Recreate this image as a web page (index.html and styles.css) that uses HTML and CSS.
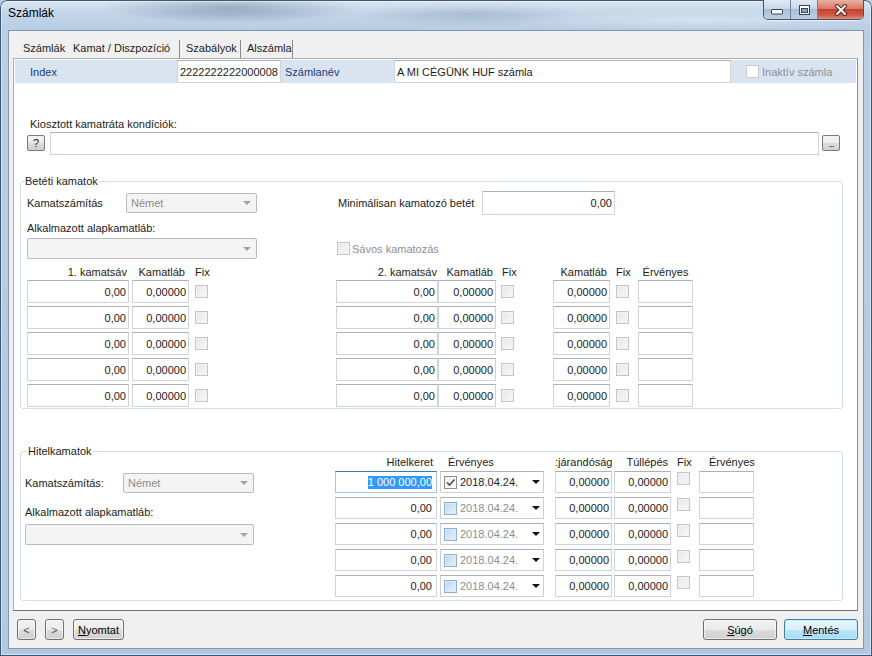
FILE: index.html
```html
<!DOCTYPE html>
<html lang="hu">
<head>
<meta charset="utf-8">
<title>Számlák</title>
<link rel="stylesheet" href="styles.css">
</head>
<body>
<div class="window">
  <div class="titlebar">
    <span class="title">Számlák</span>
    <div class="caption">
      <span class="cbtn min"><svg width="12" height="6" viewBox="0 0 12 6"><rect x="0.5" y="0.5" width="11" height="4.5" rx="0.5" fill="#fff" stroke="#34465c"/></svg></span>
      <span class="cbtn max"><svg width="11" height="10" viewBox="0 0 11 10"><rect x="0.5" y="0.5" width="10" height="9" fill="#fff" stroke="#34465c"/><rect x="2.5" y="3.5" width="6" height="4" fill="#8fa3ba" stroke="#34465c"/></svg></span>
      <span class="cbtn close"><svg width="14" height="12" viewBox="0 0 14 12"><path d="M3 2 L11 10 M11 2 L3 10" stroke="#5a2620" stroke-width="4" stroke-linecap="round"/><path d="M3 2 L11 10 M11 2 L3 10" stroke="#fff" stroke-width="2" stroke-linecap="round"/></svg></span>
    </div>
  </div>

  <div class="client">
    <div class="tabs">
      <span class="tab t1">Számlák</span>
      <span class="tab t2 active">Kamat / Diszpozíció</span>
      <span class="tab t3">Szabályok</span>
      <span class="tab t4">Alszámla</span>
    </div>

    <div class="page">
      <div class="hdr">
        <span class="hlabel w147">Index</span>
        <span class="tb hin w104">2222222222000008</span>
        <span class="hlabel ml4 w109">Számlanév</span>
        <span class="tb hin w337">A MI CÉGÜNK HUF számla</span>
        <span class="chk white ml15"></span>
        <span class="distext ml3">Inaktív számla</span>
      </div>

      <div class="klabel">Kiosztott kamatráta kondíciók:</div>
      <div class="krow">
        <span class="sbtn">?</span>
        <span class="tb klong ml5"></span>
        <span class="sbtn dots ml3">...</span>
      </div>

      <fieldset class="grp beteti">
        <legend class="lg1">Betéti kamatok</legend>
        <div class="gbody">
          <div class="brow ra">
            <div class="tl">
              <span class="lbl w99">Kamatszámítás</span>
              <span class="sel w131">Német<i class="arr"></i></span>
            </div>
            <div class="tr">
              <span class="lbl ml2 w144">Minimálisan kamatozó betét</span>
              <span class="tb num tall w133">0,00</span>
            </div>
          </div>
          <div class="brow rb">
            <div class="tl"><span class="lbl">Alkalmazott alapkamatláb:</span></div>
          </div>
          <div class="brow rc">
            <div class="tl"><span class="sel w230 h21"><i class="arr"></i></span></div>
            <div class="tr"><span class="chk ml1"></span><span class="distext ml2">Sávos kamatozás</span></div>
          </div>
          <div class="brow thr">
            <div class="tl">
              <span class="th w102 r pr2">1. kamatsáv</span>
              <span class="th w57 ml3 r pr4">Kamatláb</span>
              <span class="th ml6">Fix</span>
            </div>
            <div class="tr">
              <span class="th w102 r pr1">2. kamatsáv</span>
              <span class="th w58 r pr3">Kamatláb</span>
              <span class="th w13 ml5 pl1">Fix</span>
              <span class="th w57 ml39 r pr3">Kamatláb</span>
              <span class="th w13 ml6">Fix</span>
              <span class="th w55 ml9 c">Érvényes</span>
            </div>
          </div>

          <div class="trow first">
            <div class="tl"><span class="tb num w102">0,00</span><span class="tb num w57 ml3">0,00000</span><span class="chk ml6"></span></div>
            <div class="tr"><span class="tb num w102">0,00</span><span class="tb num w58">0,00000</span><span class="chk ml5"></span><span class="tb num w57 ml39">0,00000</span><span class="chk ml6"></span><span class="tb w55 ml9"></span></div>
          </div>
          <div class="trow">
            <div class="tl"><span class="tb num w102">0,00</span><span class="tb num w57 ml3">0,00000</span><span class="chk ml6"></span></div>
            <div class="tr"><span class="tb num w102">0,00</span><span class="tb num w58">0,00000</span><span class="chk ml5"></span><span class="tb num w57 ml39">0,00000</span><span class="chk ml6"></span><span class="tb w55 ml9"></span></div>
          </div>
          <div class="trow">
            <div class="tl"><span class="tb num w102">0,00</span><span class="tb num w57 ml3">0,00000</span><span class="chk ml6"></span></div>
            <div class="tr"><span class="tb num w102">0,00</span><span class="tb num w58">0,00000</span><span class="chk ml5"></span><span class="tb num w57 ml39">0,00000</span><span class="chk ml6"></span><span class="tb w55 ml9"></span></div>
          </div>
          <div class="trow">
            <div class="tl"><span class="tb num w102">0,00</span><span class="tb num w57 ml3">0,00000</span><span class="chk ml6"></span></div>
            <div class="tr"><span class="tb num w102">0,00</span><span class="tb num w58">0,00000</span><span class="chk ml5"></span><span class="tb num w57 ml39">0,00000</span><span class="chk ml6"></span><span class="tb w55 ml9"></span></div>
          </div>
          <div class="trow">
            <div class="tl"><span class="tb num w102">0,00</span><span class="tb num w57 ml3">0,00000</span><span class="chk ml6"></span></div>
            <div class="tr"><span class="tb num w102">0,00</span><span class="tb num w58">0,00000</span><span class="chk ml5"></span><span class="tb num w57 ml39">0,00000</span><span class="chk ml6"></span><span class="tb w55 ml9"></span></div>
          </div>
        </div>
      </fieldset>

      <fieldset class="grp hitel">
        <legend class="lg2">Hitelkamatok</legend>
        <div class="gbody hbody">
          <div class="hleft">
            <div class="hl1">
              <span class="lbl w98">Kamatszámítás:</span>
              <span class="sel w131">Német<i class="arr"></i></span>
            </div>
            <div class="hl2 lbl">Alkalmazott alapkamatláb:</div>
            <span class="sel w229 h21 hl3"><i class="arr"></i></span>
          </div>
          <div class="hright">
            <div class="hth">
              <span class="th w102 r pr4">Hitelkeret</span>
              <span class="th w104 ml3 pl8">Érvényes</span>
              <span class="th w57 ml11 clip">:járandóság</span>
              <span class="th w57 ml2 r pr3">Túllépés</span>
              <span class="th w13 ml6">Fix</span>
              <span class="th w55 ml9 pl10">Érvényes</span>
            </div>
            <div class="hrow first">
              <span class="tb num focus w102 pr4"><span class="selt">1 000 000,00</span></span>
              <span class="dp ml3"><span class="chk checked"><svg width="11" height="11" viewBox="0 0 11 11"><path d="M2 5.5 L4.5 8 L9.5 2.5" fill="none" stroke="#4a4a4a" stroke-width="1.6"/></svg></span><span class="dtxt">2018.04.24.</span><span class="dd"></span></span>
              <span class="tb num w57 ml11">0,00000</span>
              <span class="tb num w57 ml2">0,00000</span>
              <span class="chk top ml6"></span>
              <span class="tb w55 ml9"></span>
            </div>
            <div class="hrow">
              <span class="tb num w102 pr4">0,00</span>
              <span class="dp ml3"><span class="chk blue"></span><span class="dtxt grey">2018.04.24.</span><span class="dd"></span></span>
              <span class="tb num w57 ml11">0,00000</span>
              <span class="tb num w57 ml2">0,00000</span>
              <span class="chk top ml6"></span>
              <span class="tb w55 ml9"></span>
            </div>
            <div class="hrow">
              <span class="tb num w102 pr4">0,00</span>
              <span class="dp ml3"><span class="chk blue"></span><span class="dtxt grey">2018.04.24.</span><span class="dd"></span></span>
              <span class="tb num w57 ml11">0,00000</span>
              <span class="tb num w57 ml2">0,00000</span>
              <span class="chk top ml6"></span>
              <span class="tb w55 ml9"></span>
            </div>
            <div class="hrow">
              <span class="tb num w102 pr4">0,00</span>
              <span class="dp ml3"><span class="chk blue"></span><span class="dtxt grey">2018.04.24.</span><span class="dd"></span></span>
              <span class="tb num w57 ml11">0,00000</span>
              <span class="tb num w57 ml2">0,00000</span>
              <span class="chk top ml6"></span>
              <span class="tb w55 ml9"></span>
            </div>
            <div class="hrow">
              <span class="tb num w102 pr4">0,00</span>
              <span class="dp ml3"><span class="chk blue"></span><span class="dtxt grey">2018.04.24.</span><span class="dd"></span></span>
              <span class="tb num w57 ml11">0,00000</span>
              <span class="tb num w57 ml2">0,00000</span>
              <span class="chk top ml6"></span>
              <span class="tb w55 ml9"></span>
            </div>
          </div>
        </div>
      </fieldset>
    </div>

    <div class="footer">
      <span class="btn small">&lt;</span>
      <span class="btn small ml9">&gt;</span>
      <span class="btn ml9 w51"><u>N</u>yomtat</span>
      <span class="btn w74 push"><u>S</u>úgó</span>
      <span class="btn w74 ml7 default"><u>M</u>entés</span>
    </div>
  </div>
</div>
</body>
</html>
```

FILE: styles.css
```css
* { box-sizing: border-box; }
html, body { margin: 0; padding: 0; }
body {
  width: 872px;
  height: 656px;
  overflow: hidden;
  font-family: "Liberation Sans", Arial, sans-serif;
  font-size: 11px;
  color: #1c1c1c;
  background: #b9cee5;
}

/* window frame */
.window {
  width: 872px;
  height: 656px;
  display: flex;
  flex-direction: column;
  border-radius: 7px 7px 0 0;
  overflow: hidden;
  box-shadow: inset 0 0 0 1px #3b5877, inset 0 0 0 2px rgba(255,255,255,0.45);
  background:
    linear-gradient(180deg, rgba(255,255,255,0.35) 0, rgba(255,255,255,0) 14px),
    radial-gradient(ellipse 130px 16px at 230px 7px, rgba(60,90,125,0.45), rgba(60,90,125,0)),
    radial-gradient(ellipse 110px 12px at 470px 14px, rgba(90,120,150,0.25), rgba(90,120,150,0)),
    radial-gradient(ellipse 200px 10px at 700px 20px, rgba(255,255,255,0.35), rgba(255,255,255,0)),
    linear-gradient(180deg, #c9d9ea 0, #b9cde4 30px, #b3c9e1 100%);
}

.titlebar {
  flex: none;
  height: 30px;
  display: flex;
  align-items: flex-start;
}
.title {
  margin: 6px 0 0 8px;
  font-size: 12px;
  line-height: 14px;
  color: #000;
}
.caption {
  margin-left: auto;
  margin-right: 8px;
  display: flex;
  height: 20px;
  border: 1px solid #3f546b;
  border-top: 0;
  border-radius: 0 0 5px 5px;
  overflow: hidden;
  box-shadow: 0 1px 0 rgba(255,255,255,0.6);
}
.cbtn {
  display: flex;
  align-items: center;
  justify-content: center;
  height: 100%;
}
.cbtn.min, .cbtn.max {
  width: 27px;
  border-right: 1px solid #6f839b;
  background: linear-gradient(180deg, #e1eaf4 0, #c8d7e8 45%, #a9bfd8 50%, #bccfe3 100%);
}
.cbtn.min svg { margin-top: 5px; }
.cbtn.close {
  width: 45px;
  background: linear-gradient(180deg, #eab0a6 0, #d87a66 45%, #c3432f 50%, #cf5a45 80%, #e2917f 100%);
}

/* client area */
.client {
  flex: none;
  height: 619px;
  margin: 0 8px;
  border: 1px solid #8397ad;
  background: #f0f0f0;
  display: flex;
  flex-direction: column;
}

.tabs {
  flex: none;
  display: flex;
  height: 18px;
  margin: 9px 0 0 9px;
}
.tab {
  line-height: 17px;
  white-space: nowrap;
}
.t1 { width: 50px; padding-left: 5px; }
.t2 { width: 111px; padding-left: 5px; }
.t3 { width: 61px; padding-left: 6px; border-left: 1px solid #8c8c8c; }
.t4 { width: 53px; padding-left: 6px; border-left: 1px solid #8c8c8c; border-right: 1px solid #8c8c8c; }

.page {
  flex: none;
  width: 845px;
  height: 553px;
  margin-left: 4px;
  background: #fff;
  border: 1px solid #a9acb2;
  border-right-color: #8a8d93;
  border-bottom-color: #6e7075;
  display: flex;
  flex-direction: column;
}

/* header strip */
.hdr {
  flex: none;
  display: flex;
  align-items: center;
  height: 23px;
  margin: 1px 1px 0 1px;
  padding-left: 15px;
  background: #dae4f0;
}
.hlabel { flex: none; color: #1d3c78; white-space: nowrap; }
.hin { height: 20px; }
.distext { color: #8c8f98; white-space: nowrap; }

.klabel {
  flex: none;
  margin: 34px 0 0 16px;
  line-height: 14px;
}
.krow {
  flex: none;
  display: flex;
  align-items: center;
  height: 20px;
  margin: 2px 0 0 13px;
}
.klong { width: 769px; height: 20px; }

/* generic controls */
.tb {
  flex: none;
  display: flex;
  align-items: center;
  height: 23px;
  padding: 0 2px;
  background: #fff;
  border: 1px solid #d0d4da;
  border-top-color: #acb0b7;
  white-space: nowrap;
  overflow: hidden;
}
.tb.num { justify-content: flex-end; }
.tb.tall { height: 24px; }
.tb.focus { border-color: #a4c9e3; border-top-color: #3d7bad; }
.selt { background: #3399ff; color: #fff; line-height: 13px; }

.chk {
  flex: none;
  display: flex;
  align-items: center;
  justify-content: center;
  width: 13px;
  height: 13px;
  border: 1px solid #c4c4c4;
  background: linear-gradient(135deg, #e6e6e6, #f8f8f8);
  box-shadow: inset 0 0 0 1px #f3f3f3;
}
.chk.white { background: #fff; border-color: #c9cbd0; box-shadow: none; }
.chk.top { align-self: flex-start; margin-top: 1px; }
.chk.blue {
  border-color: #8fb0d2;
  background: linear-gradient(135deg, #bcd6ef, #e9f3fc);
  box-shadow: inset 0 0 0 1px #dbeaf8;
}
.chk.checked {
  border-color: #8e8f8f;
  background: linear-gradient(135deg, #ececec, #ffffff);
  box-shadow: none;
}

.sel {
  flex: none;
  display: flex;
  align-items: center;
  height: 20px;
  padding-left: 4px;
  border: 1px solid #b8bbc0;
  border-radius: 2px;
  background: #f4f4f4;
  color: #8c8c8c;
}
.sel.h21 { height: 21px; }
.arr {
  margin-left: auto;
  margin-right: 5px;
  width: 0;
  height: 0;
  border-left: 4px solid transparent;
  border-right: 4px solid transparent;
  border-top: 4px solid #a3a3a3;
}

.sbtn {
  flex: none;
  display: flex;
  align-items: center;
  justify-content: center;
  width: 18px;
  height: 16px;
  border: 1px solid #7a7a7a;
  border-radius: 2px;
  background: linear-gradient(180deg, #f4f4f4 0, #ececec 50%, #dcdcdc 51%, #d0d0d0 100%);
  color: #222;
  font-size: 11px;
  line-height: 14px;
}
.sbtn.dots { align-items: flex-end; font-size: 9px; line-height: 11px; letter-spacing: -1px; }

/* group boxes */
.grp {
  flex: none;
  margin: 22px 14px 0 6px;
  padding: 0 0 1px 0;
  border: 1px solid #d5dde3;
  border-radius: 3px;
  min-width: 0;
}
.grp.hitel { margin-top: 37px; padding-bottom: 3px; }
legend { padding: 0 1px; font-size: 11px; }
.lg1 { margin-left: 3px; line-height: 12px; }
.lg2 { margin-left: 6px; line-height: 10px; }

.gbody { padding-left: 6px; }
.brow { display: flex; align-items: center; }
.brow.ra { height: 23px; margin-top: 4px; }
.brow.rb { height: 14px; margin-top: 7px; }
.brow.rc { height: 21px; margin-top: 3px; }
.brow.thr { height: 14px; margin-top: 6px; }
.tl { flex: none; width: 309px; display: flex; align-items: center; height: 100%; }
.tr { display: flex; align-items: center; height: 100%; }
.lbl { flex: none; white-space: nowrap; line-height: 14px; }
.th { flex: none; white-space: nowrap; line-height: 14px; }
.th.r { text-align: right; }
.th.c { text-align: center; }
.th.clip { overflow: hidden; }

.trow { display: flex; height: 23px; margin-top: 3px; }
.trow.first { margin-top: 1px; }

/* hitel */
.hbody { display: flex; padding-left: 4px; }
.hleft { flex: none; width: 310px; display: flex; flex-direction: column; align-items: flex-start; }
.hl1 { display: flex; align-items: center; height: 20px; margin-top: 17px; }
.hl2 { margin-top: 12px; }
.hl3 { margin-top: 5px; }
.hright { display: flex; flex-direction: column; }
.hth { display: flex; height: 14px; margin-top: -1px; }
.hrow { display: flex; align-items: center; height: 22px; margin-top: 4px; }
.hrow.first { margin-top: 2px; }
.hrow .tb { height: 22px; }

.dp {
  flex: none;
  display: flex;
  align-items: center;
  width: 104px;
  height: 22px;
  padding-left: 3px;
  background: #fff;
  border: 1px solid #ccd0d6;
  border-top-color: #acb0b7;
}
.dtxt { margin-left: 3px; font-size: 11px; white-space: nowrap; }
.dtxt.grey { color: #8d8d8d; }
.dd {
  margin-left: auto;
  margin-right: 3px;
  width: 0;
  height: 0;
  border-left: 4px solid transparent;
  border-right: 4px solid transparent;
  border-top: 4px solid #111;
}

/* footer */
.footer {
  flex: none;
  display: flex;
  align-items: flex-start;
  padding: 8px 5px 0 8px;
}
.btn {
  flex: none;
  display: flex;
  align-items: center;
  justify-content: center;
  height: 21px;
  border: 1px solid #707070;
  border-radius: 3px;
  background: linear-gradient(180deg, #f2f2f2 0, #ebebeb 50%, #dddddd 51%, #cfcfcf 100%);
  color: #000;
  box-shadow: inset 0 0 0 1px rgba(255,255,255,0.6);
}
.btn.small { width: 19px; color: #555; }
.btn.default {
  border-color: #3c7fb1;
  background: linear-gradient(180deg, #eaf6fd 0, #d9f0fc 50%, #bee6fd 51%, #a7d9f5 100%);
  box-shadow: inset 0 0 0 1px #c8ecfd;
}
.btn.push { margin-left: auto; }

/* sizes and spacing */
.w13 { width: 13px; }
.w51 { width: 51px; }
.w55 { width: 55px; }
.w57 { width: 57px; }
.w58 { width: 58px; }
.w74 { width: 74px; }
.w98 { width: 98px; }
.w99 { width: 99px; }
.w102 { width: 102px; }
.w104 { width: 104px; }
.w109 { width: 109px; }
.w131 { width: 131px; }
.w133 { width: 133px; }
.w144 { width: 144px; }
.w147 { width: 147px; }
.w229 { width: 229px; }
.w230 { width: 230px; }
.w337 { width: 337px; }
.ml1 { margin-left: 1px; }
.ml2 { margin-left: 2px; }
.ml3 { margin-left: 3px; }
.ml4 { margin-left: 4px; }
.ml5 { margin-left: 5px; }
.ml6 { margin-left: 6px; }
.ml7 { margin-left: 7px; }
.ml9 { margin-left: 9px; }
.ml11 { margin-left: 11px; }
.ml15 { margin-left: 15px; }
.ml39 { margin-left: 39px; }
.pr1 { padding-right: 1px; }
.pr2 { padding-right: 2px; }
.pr3 { padding-right: 3px; }
.pr4 { padding-right: 4px; }
.pl1 { padding-left: 1px; }
.pl8 { padding-left: 8px; }
.pl10 { padding-left: 10px; }
```
